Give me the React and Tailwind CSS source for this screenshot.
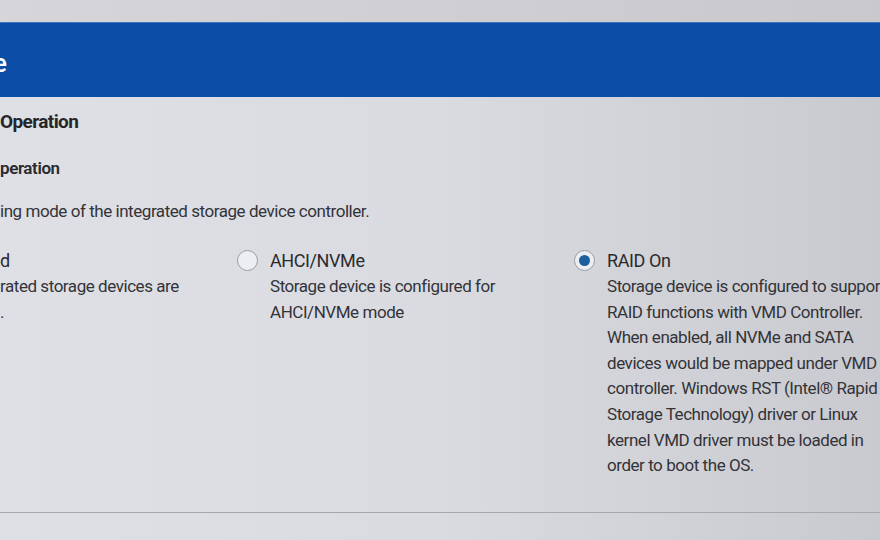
import React from 'react';

const FONT = { fontFamily: 'Roboto, "Noto Sans", sans-serif' };

function Radio({ checked }) {
  return (
    <span className="w-[21px] h-[21px] rounded-full border-[1.5px] border-[#9a9ca2] bg-[#eceef2] flex items-center justify-center shrink-0">
      {checked && <span className="w-[11px] h-[11px] rounded-full bg-[#1e5f9e]" />}
    </span>
  );
}

function Option({ checked, label, lines, radio = true, className = '' }) {
  return (
    <div className={`flex flex-col shrink-0 ${className}`}>
      <div className="flex items-center gap-[12px] h-[25px]">
        {radio && <Radio checked={checked} />}
        <span className="text-[18px] text-[#2b2b2e] tracking-[-0.4px]">{label}</span>
      </div>
      <div className={`${radio ? 'pl-[33px]' : ''} mt-[1px] text-[17px] leading-[25.6px] text-[#333338] tracking-[-0.45px]`}>
        {lines.map((l, i) => (
          <div key={i} className="whitespace-nowrap">{l}</div>
        ))}
      </div>
    </div>
  );
}

export default function App() {
  return (
    <div style={FONT} className="w-[880px] h-[540px] overflow-hidden flex flex-col bg-gradient-to-r from-[#dfe0e6] via-[#dadbe1] to-[#c9cacf]">
      <div className="h-[22px] bg-gradient-to-r from-[#d6d6da] to-[#c9c9cd]" />
      <div className="h-[75px] bg-[#0c4ea7] border-t border-[#3d73bd] flex items-center">
        <span className="text-white text-[26px] font-medium -ml-[7px] mt-[6px]">e</span>
      </div>
      <div className="flex-1 flex flex-col">
        <div className="mt-[11px] text-[19px] font-bold text-[#26262a] leading-[28px] tracking-[-0.6px]">Operation</div>
        <div className="mt-[20px] text-[17px] font-semibold text-[#2a2a2e] leading-[24px] tracking-[-0.4px]">peration</div>
        <div className="mt-[19px] text-[17px] text-[#333338] leading-[24px] tracking-[-0.45px]">ing mode of the integrated storage device controller.</div>
        <div className="mt-[25px] flex h-[264px]">
          <Option radio={false} className="w-[237px]" label="d" lines={['rated storage devices are', '.']} />
          <Option className="w-[337px]" label="AHCI/NVMe" lines={['Storage device is configured for', 'AHCI/NVMe mode']} />
          <Option
            checked
            className="w-[306px]"
            label="RAID On"
            lines={[
              'Storage device is configured to support',
              'RAID functions with VMD Controller.',
              'When enabled, all NVMe and SATA',
              'devices would be mapped under VMD',
              'controller. Windows RST (Intel® Rapid',
              'Storage Technology) driver or Linux',
              'kernel VMD driver must be loaded in',
              'order to boot the OS.',
            ]}
          />
        </div>
        <div className="border-t border-[#a6a7ad]" />
      </div>
    </div>
  );
}
